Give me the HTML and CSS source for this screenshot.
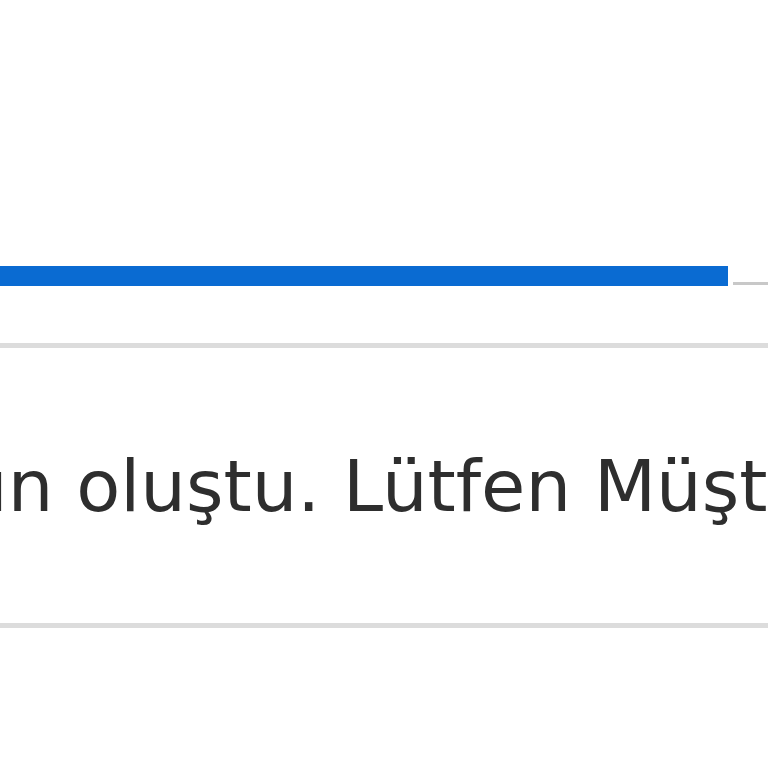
FILE: index.html
```html
<!DOCTYPE html>
<html lang="tr">
<head>
<meta charset="utf-8">
<link rel="stylesheet" href="styles.css">
</head>
<body>
<div class="page">
  <div class="progress">
    <div class="progress-fill"></div>
    <div class="progress-track"></div>
  </div>
  <div class="divider"></div>
  <div class="message"><span class="msg-text">Bir sorun oluştu. Lütfen Müşteri Hizmetleri ile iletişime geçin.</span></div>
  <div class="divider"></div>
</div>
</body>
</html>
```
FILE: styles.css
```css
html, body {
  margin: 0;
  padding: 0;
  background: #ffffff;
  width: 768px;
  height: 768px;
  overflow: hidden;
}
.page {
  display: flex;
  flex-direction: column;
  padding-top: 266px;
}
.progress {
  display: flex;
  align-items: flex-end;
  height: 20px;
}
.progress-fill {
  width: 728px;
  height: 20px;
  background: #0a6bd2;
  flex: none;
}
.progress-track {
  flex: 1;
  height: 3px;
  margin-left: 5px;
  margin-bottom: 1px;
  background: #c8c8c8;
}
.divider {
  height: 5px;
  background: #dcdcdc;
  flex: none;
}
.progress + .divider {
  margin-top: 57px;
}
.message {
  height: 275px;
  overflow: hidden;
  white-space: nowrap;
  font-family: "DejaVu Sans", Verdana, sans-serif;
  font-size: 72px;
  color: #2e2e2e;
  display: flex;
  align-items: center;
}
.msg-text {
  margin-left: -271px;
}
```
